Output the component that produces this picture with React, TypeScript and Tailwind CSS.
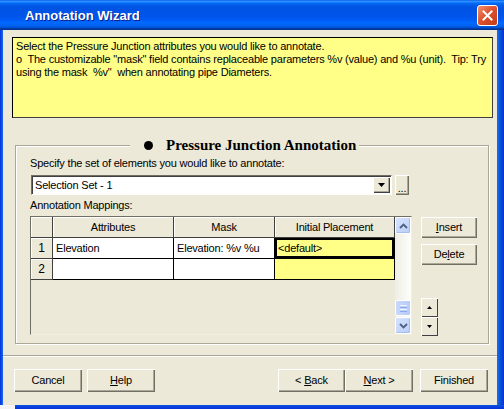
import type { ReactNode } from 'react';

const btn =
  'flex items-center justify-center bg-[#ece9d8] shadow-[inset_1px_1px_0_#fff,inset_-1px_-1px_0_#716f64,inset_-2px_-2px_0_#aca899]';

function Button({ className, children }: { className: string; children: ReactNode }) {
  return <div className={`${btn} ${className}`}>{children}</div>;
}

function HeaderCell({ className, children }: { className: string; children?: ReactNode }) {
  return (
    <div
      className={`flex items-center justify-center h-full bg-[#ece9d8] border-r border-b border-[#404040] shadow-[inset_1px_1px_0_#fff] ${className}`}
    >
      {children}
    </div>
  );
}

function Cell({ className, children }: { className: string; children?: ReactNode }) {
  return <div className={`flex items-center h-full border-r border-b border-black pl-[3px] ${className}`}>{children}</div>;
}

function Chevron({ up }: { up?: boolean }) {
  return (
    <svg width="9" height="6" viewBox="0 0 9 6">
      <path
        d={up ? 'M1 5 L4.5 1.5 L8 5' : 'M1 1 L4.5 4.5 L8 1'}
        fill="none"
        stroke="#4d6185"
        strokeWidth="1.8"
      />
    </svg>
  );
}

function Tri({ up, w = 7 }: { up?: boolean; w?: number }) {
  const h = Math.ceil(w / 2);
  return (
    <svg width={w} height={h} viewBox={`0 0 ${w} ${h}`}>
      <polygon points={up ? `0,${h} ${w / 2},0 ${w},${h}` : `0,0 ${w},0 ${w / 2},${h}`} fill="#000" />
    </svg>
  );
}

export default function App() {
  return (
    <div className="w-[504px] h-[409px] flex flex-col overflow-hidden font-['Liberation_Sans',Arial,sans-serif] text-[11px] leading-[13px] tracking-[-0.2px] text-black">
      {/* title bar */}
      <div className="h-[30px] shrink-0 flex items-center bg-[linear-gradient(180deg,#0058ee_0%,#3593ff_4%,#288eff_6%,#127dff_8%,#036ffc_10%,#0262ee_14%,#0057e5_20%,#0054e3_24%,#0055eb_56%,#005bf5_66%,#026afe_76%,#0062ef_86%,#0052d6_92%,#0040ab_94%,#003092_100%)]">
        <span className="ml-[25px] text-[13px] font-bold tracking-normal text-white [text-shadow:1px_1px_0_#0a1f8f]">
          Annotation Wizard
        </span>
        <div className="ml-auto mr-[6px] w-[21px] h-[21px] rounded-[3px] border border-white flex items-center justify-center bg-[linear-gradient(135deg,#f0926e,#e0532f_45%,#c23b14)]">
          <svg width="11" height="11" viewBox="0 0 11 11">
            <path d="M1.5 1.5 L9.5 9.5 M9.5 1.5 L1.5 9.5" stroke="#fff" strokeWidth="2" strokeLinecap="square" />
          </svg>
        </div>
      </div>

      <div className="flex flex-1">
        <div className="w-[3px] bg-[linear-gradient(90deg,#0831d9,#166aee)]" />
        <div className="flex-1 bg-[#ece9d8] flex flex-col">
          {/* description */}
          <div className="ml-[9px] mt-[7px] w-[481px] h-[81px] bg-[#ffff88] border border-black border-r-[#404040] border-b-[#404040] pl-[3px] pt-[2px] whitespace-pre">
            <div>Select the Pressure Junction attributes you would like to annotate.</div>
            <div>o  The customizable "mask" field contains replaceable parameters %v (value) and %u (unit).  Tip: Try</div>
            <div>using the mask  %v"  when annotating pipe Diameters.</div>
          </div>

          {/* group box */}
          <div className="ml-[12px] mt-[27px] w-[474px] h-[199px] border border-[#aca899] shadow-[inset_1px_1px_0_#fff,1px_1px_0_#fff] flex flex-col">
            <div className="h-0 -mt-px flex items-center pl-[114px]">
              <span className="flex items-center bg-[#ece9d8] pl-[14px] pr-[3px] gap-[13px]">
                <span className="w-[9px] h-[9px] rounded-full bg-black" />
                <span className="font-['Liberation_Serif','Times_New_Roman',serif] font-bold text-[15px] leading-[17px] tracking-normal">
                  Pressure Junction Annotation
                </span>
              </span>
            </div>

            <div className="mt-[12px] pl-[14px]">Specify the set of elements you would like to annotate:</div>

            <div className="mt-[5px] pl-[15px] flex">
              <div className="w-[361px] h-[20px] bg-white border border-t-[#716f64] border-l-[#716f64] border-r-white border-b-white shadow-[inset_1px_1px_0_#404040] flex items-center">
                <span className="flex-1 pl-[3px]">Selection Set - 1</span>
                <div className="w-[17px] h-[16px] mr-[1px] bg-[#ece9d8] shadow-[inset_1px_1px_0_#fff,inset_-1px_-1px_0_#404040,inset_-2px_-2px_0_#aca899] flex items-center justify-center">
                  <Tri />
                </div>
              </div>
              <div className="ml-[3px] w-[14px] h-[20px] bg-[#ece9d8] shadow-[inset_1px_1px_0_#fff,inset_-1px_-1px_0_#716f64,inset_-2px_-2px_0_#aca899] flex items-end justify-center pb-[3px] leading-[8px]">
                ...
              </div>
            </div>

            <div className="mt-[4px] pl-[14px]">Annotation Mappings:</div>

            <div className="mt-[4px] pl-[14px] flex">
              {/* grid */}
              <div className="w-[382px] h-[119px] border border-t-[#716f64] border-l-[#716f64] border-r-[#f1efe2] border-b-[#f1efe2] flex bg-[#ece9d8]">
                <div className="w-[364px] flex flex-col">
                  <div className="h-[21px] flex">
                    <HeaderCell className="w-[22px]" />
                    <HeaderCell className="w-[121px]">Attributes</HeaderCell>
                    <HeaderCell className="w-[101px]">Mask</HeaderCell>
                    <HeaderCell className="w-[120px]">Initial Placement</HeaderCell>
                  </div>
                  <div className="h-[21px] flex">
                    <HeaderCell className="w-[22px] text-[12px]">1</HeaderCell>
                    <Cell className="w-[121px] bg-white">Elevation</Cell>
                    <Cell className="w-[101px] bg-white">Elevation: %v %u</Cell>
                    <Cell className="w-[120px] bg-[#ffff88] shadow-[inset_0_0_0_2px_#000]">&lt;default&gt;</Cell>
                  </div>
                  <div className="h-[21px] flex">
                    <HeaderCell className="w-[22px] text-[12px]">2</HeaderCell>
                    <Cell className="w-[121px] bg-white" />
                    <Cell className="w-[101px] bg-white" />
                    <Cell className="w-[120px] bg-[#ffff88]" />
                  </div>
                </div>
                {/* scrollbar */}
                <div className="w-[16px] flex flex-col bg-[linear-gradient(90deg,#eeede5,#fefefb)]">
                  <div className="h-[17px] rounded-[2px] border border-[#fff] bg-[linear-gradient(135deg,#d6e3fe,#bacdf7)] shadow-[inset_-1px_-1px_0_#a6bdf0] flex items-center justify-center">
                    <Chevron up />
                  </div>
                  <div className="flex-1" />
                  <div className="h-[16px] rounded-[2px] border border-[#fff] bg-[linear-gradient(90deg,#c9d8fc,#b6cbf7)] flex flex-col items-center justify-center gap-[1px]">
                    <span className="w-[7px] h-px bg-[#eef4fe]" />
                    <span className="w-[7px] h-px bg-[#8caaea]" />
                    <span className="w-[7px] h-px bg-[#eef4fe]" />
                    <span className="w-[7px] h-px bg-[#8caaea]" />
                  </div>
                  <div className="h-[17px] mt-[1px] rounded-[2px] border border-[#fff] bg-[linear-gradient(135deg,#d6e3fe,#bacdf7)] shadow-[inset_-1px_-1px_0_#a6bdf0] flex items-center justify-center">
                    <Chevron />
                  </div>
                </div>
              </div>

              {/* side buttons */}
              <div className="ml-[9px] flex flex-col">
                <Button className="w-[56px] h-[21px] mt-[1px]">
                  <span>
                    <u>I</u>nsert
                  </span>
                </Button>
                <Button className="w-[56px] h-[21px] mt-[6px]">
                  <span>
                    De<u>l</u>ete
                  </span>
                </Button>
                <div className="mt-[33px] w-[17px] h-[19px] bg-[#ece9d8] shadow-[inset_1px_1px_0_#fff,inset_-1px_-1px_0_#404040] flex items-center justify-center">
                  <Tri up w={5} />
                </div>
                <div className="w-[17px] h-[19px] bg-[#ece9d8] shadow-[inset_1px_1px_0_#fff,inset_-1px_-1px_0_#404040] flex items-center justify-center">
                  <Tri w={5} />
                </div>
              </div>
            </div>
          </div>

          {/* separator */}
          <div className="mt-[11px] h-[2px] border-t border-[#aca899] border-b border-b-white" />

          {/* bottom buttons */}
          <div className="mt-[12px] flex">
            <Button className="h-[23px] ml-[11px] w-[68px]">Cancel</Button>
            <Button className="h-[23px] ml-[5px] w-[68px]">
              <span>
                <u>H</u>elp
              </span>
            </Button>
            <Button className="h-[23px] ml-[123px] w-[67px]">
              <span>
                &lt; <u>B</u>ack
              </span>
            </Button>
            <Button className="h-[23px] w-[68px]">
              <span>
                <u>N</u>ext &gt;
              </span>
            </Button>
            <Button className="h-[23px] ml-[7px] w-[68px]">Finished</Button>
          </div>
        </div>
        <div className="w-[7px] bg-[linear-gradient(90deg,#1b6df2,#0a4fd8,#0831d9)]" />
      </div>
      <div className="h-[4px] shrink-0 flex">
        <div className="w-[15px] bg-[#f4f4f4]" />
        <div className="flex-1 bg-[linear-gradient(180deg,#0a52e0,#0831d9)]" />
      </div>
    </div>
  );
}
